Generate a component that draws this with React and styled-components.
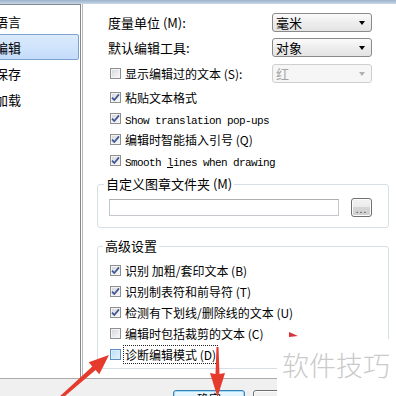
import React from 'react';
import styled, { createGlobalStyle } from 'styled-components';

const GlobalStyle = createGlobalStyle`
  html, body { margin: 0; padding: 0; background: #fff; }
  body { font-family: "Noto Sans CJK SC", "Liberation Sans", sans-serif; color: #000; }
`;

const Window = styled.div`
  position: relative;
  width: 396px;
  height: 396px;
  overflow: hidden;
  display: flex;
  flex-direction: column;
  background: #fff;
`;

const FrameEdge = styled.div`
  flex: none;
  height: 4px;
  background: linear-gradient(#9bb2cc, #c9d7e6);
`;

const Body = styled.div`
  flex: none;
  box-sizing: border-box;
  height: 375px;
  display: flex;
  border-bottom: 1px solid #a9a9a9;
`;

const SideList = styled.div`
  flex: none;
  box-sizing: border-box;
  width: 81px;
  padding-top: 3px;
  border-top: 1px solid #828790;
  border-right: 1px solid #828790;
  background: #fff;
`;

const ListItem = styled.div`
  box-sizing: border-box;
  height: 26px;
  margin: 0 1px 0 -6px;
  display: flex;
  align-items: center;
  font-size: 13px;
  white-space: nowrap;
  border: 1px solid ${(p) => (p.$selected ? '#7da2ce' : 'transparent')};
  border-radius: 2px;
  background: ${(p) => (p.$selected ? 'linear-gradient(#dcebfc, #c4dcfb)' : 'transparent')};
`;

const Panel = styled.div`
  flex: 1;
  margin-left: 1px;
  padding: 9px 7px 0 14px;
  border-left: 1px solid #b9b9b9;
  display: flex;
  flex-direction: column;
`;

const FieldRow = styled.div`
  height: 19px;
  display: flex;
  align-items: center;
  padding: 0 17px 0 ${(p) => p.$indent}px;
  margin-top: ${(p) => p.$gap || 0}px;
  font-size: 13px;
`;

const CheckRow = styled.div`
  height: ${(p) => p.$h || 21}px;
  display: flex;
  align-items: center;
  padding-left: ${(p) => (p.$flush ? 0 : 13)}px;
  padding-right: 17px;
  margin-top: ${(p) => p.$gap || 0}px;
  font-size: 12px;
  white-space: nowrap;
`;

const Box = styled.span`
  flex: none;
  box-sizing: border-box;
  width: 11px;
  height: 11px;
  margin-right: 3px;
  border: 1px solid ${(p) => (p.$focus ? '#5c8fbf' : '#8e8f8f')};
  background: ${(p) =>
    p.$focus
      ? 'linear-gradient(135deg, #b9dcf3, #e4f3fc)'
      : 'linear-gradient(135deg, #d2d5da, #fbfbfb)'};
  box-shadow: inset 0 0 0 1px ${(p) => (p.$focus ? '#d9eefb' : '#f4f4f4')};
  display: flex;
  align-items: center;
  justify-content: center;
`;

const Label = styled.span`
  padding: 0 1px;
  outline: ${(p) => (p.$focus ? '1px dotted #222' : 'none')};
`;

const Mono = styled.span`
  font-family: "Liberation Mono", "DejaVu Sans Mono", monospace;
  font-size: 11px;
  letter-spacing: -0.6px;
`;

const Combo = styled.div`
  margin-left: auto;
  box-sizing: border-box;
  width: 100px;
  height: 19px;
  display: flex;
  align-items: center;
  padding: 0 6px 0 3px;
  border: 1px solid ${(p) => (p.$disabled ? '#cfcfcf' : '#8a8a8a')};
  border-radius: 3px;
  background: ${(p) =>
    p.$disabled ? '#f6f6f6' : 'linear-gradient(#fbfbfb, #ededed 50%, #e4e4e4)'};
  color: ${(p) => (p.$disabled ? '#a3a3a3' : '#000')};
  font-size: 13px;
`;

const ComboArrow = styled.span`
  margin-left: auto;
  width: 0;
  height: 0;
  border-left: 3.5px solid transparent;
  border-right: 3.5px solid transparent;
  border-top: 4px solid ${(p) => (p.$disabled ? '#b0b0b0' : '#000')};
`;

const Group = styled.fieldset`
  margin: ${(p) => p.$gap}px 0 0 0;
  padding: 0 0 ${(p) => p.$pb}px ${(p) => p.$pl}px;
  min-width: 0;
  border: 1px solid #d5dfe5;
  border-radius: 3px;
`;

const Legend = styled.legend`
  margin-left: ${(p) => p.$ml}px;
  padding: 0 2px;
  font-size: 13px;
  line-height: 14px;
`;

const FolderRow = styled.div`
  display: flex;
  align-items: flex-start;
  margin-top: 7px;
`;

const PathInput = styled.div`
  box-sizing: border-box;
  width: 230px;
  height: 17px;
  margin-top: 1px;
  border: 1px solid #c5c8cd;
  border-top-color: #acaeb2;
  background: #fff;
`;

const DotsButton = styled.div`
  box-sizing: border-box;
  width: 21px;
  height: 19px;
  margin-left: 12px;
  border: 1px solid #707070;
  border-radius: 3px;
  background: linear-gradient(#f2f2f2, #ebebeb 50%, #d6d6d6 50%, #cfcfcf);
  box-shadow: inset 0 0 0 1px #fcfcfc;
  font-size: 10px;
  line-height: 19px;
  text-align: center;
  letter-spacing: 1px;
  color: #333;
`;

const AdvRows = styled.div`
  margin-top: 7px;
  display: flex;
  flex-direction: column;
`;

const ButtonBar = styled.div`
  flex: 1;
  display: flex;
  gap: 8px;
  padding: 11px 0 0 173px;
  background: #f0f0f0;
`;

const DialogButton = styled.div`
  flex: none;
  box-sizing: border-box;
  width: 72px;
  height: 23px;
  display: flex;
  justify-content: center;
  padding-top: 1px;
  font-size: 12px;
  line-height: 14px;
  border: 1px solid ${(p) => (p.$primary ? '#3c7fb1' : '#707070')};
  border-radius: 3px;
  background: ${(p) =>
    p.$primary
      ? 'linear-gradient(#eaf6fd, #d9f0fc 50%, #bee6fd 50%, #a7d9f5)'
      : 'linear-gradient(#f2f2f2, #ebebeb 50%, #dddddd 50%, #cfcfcf)'};
  box-shadow: inset 0 0 0 1px ${(p) => (p.$primary ? '#9fdcfb' : '#fcfcfc')};
`;

const Watermark = styled.div`
  position: absolute;
  left: 277px;
  top: 339px;
  width: 119px;
  height: 57px;
  box-sizing: border-box;
  padding: 11px 0 0 5px;
  background: #fff;
  color: #cacaca;
  font-size: 27px;
  font-weight: 300;
  line-height: 30px;
  white-space: nowrap;
`;

const Marks = styled.svg`
  position: absolute;
  left: 0;
  top: 0;
  pointer-events: none;
`;

const Check = () => (
  <svg width="9" height="9" viewBox="0 0 9 9">
    <path d="M1 4.6 L3.3 7 L8 1.4" fill="none" stroke="#3f5593" strokeWidth="1.7" />
  </svg>
);

const CheckBox = ({ checked, focus, children }) => (
  <>
    <Box $focus={focus}>{checked && <Check />}</Box>
    <Label $focus={focus}>{children}</Label>
  </>
);

const advanced = [
  { text: '识别 加粗/套印文本 (B)', checked: true },
  { text: '识别制表符和前导符 (T)', checked: true },
  { text: '检测有下划线/删除线的文本 (U)', checked: true },
  { text: '编辑时包括裁剪的文本 (C)', checked: false },
  { text: '诊断编辑模式 (D)', checked: false, focus: true },
];

export default function App() {
  return (
    <Window>
      <GlobalStyle />
      <FrameEdge />
      <Body>
        <SideList>
          <ListItem>语言</ListItem>
          <ListItem $selected>编辑</ListItem>
          <ListItem>保存</ListItem>
          <ListItem>加载</ListItem>
        </SideList>
        <Panel>
          <FieldRow $indent={11}>
            度量单位 (M):
            <Combo>毫米<ComboArrow /></Combo>
          </FieldRow>
          <FieldRow $indent={11} $gap={6}>
            默认编辑工具:
            <Combo>对象<ComboArrow /></Combo>
          </FieldRow>
          <CheckRow $h={19} $gap={7}>
            <CheckBox>显示编辑过的文本 (S):</CheckBox>
            <Combo $disabled>红<ComboArrow $disabled /></Combo>
          </CheckRow>
          <CheckRow $gap={4}>
            <CheckBox checked>粘贴文本格式</CheckBox>
          </CheckRow>
          <CheckRow>
            <CheckBox checked><Mono>Show translation pop-ups</Mono></CheckBox>
          </CheckRow>
          <CheckRow>
            <CheckBox checked>编辑时智能插入引号 (Q)</CheckBox>
          </CheckRow>
          <CheckRow>
            <CheckBox checked><Mono>Smooth <u>l</u>ines when drawing</Mono></CheckBox>
          </CheckRow>

          <Group $gap={6} $pl={11} $pb={10}>
            <Legend $ml={-5}>自定义图章文件夹 (M)</Legend>
            <FolderRow>
              <PathInput />
              <DotsButton>...</DotsButton>
            </FolderRow>
          </Group>

          <Group $gap={11} $pl={12} $pb={3}>
            <Legend $ml={-7}>高级设置</Legend>
            <AdvRows>
              {advanced.map((a) => (
                <CheckRow key={a.text} $flush>
                  <CheckBox checked={a.checked} focus={a.focus}>{a.text}</CheckBox>
                </CheckRow>
              ))}
            </AdvRows>
          </Group>
        </Panel>
      </Body>
      <ButtonBar>
        <DialogButton $primary>确定</DialogButton>
        <DialogButton>取消</DialogButton>
      </ButtonBar>

      <Watermark>软件技巧</Watermark>
      <Marks width="396" height="396" viewBox="0 0 396 396">
        <polygon
          points="109,355 99.3,374.2 95.6,370.1 59,401.1 57,398.9 92.3,366.5 88.7,362.2"
          fill="#e53a2c"
        />
        <polygon
          points="217.5,397 225,373 219.5,374 218.5,347 216.5,347 215.5,374 210,373"
          fill="#e53a2c"
        />
        <polygon points="289,332 298,336 289,337" fill="#d8323a" />
      </Marks>
    </Window>
  );
}
